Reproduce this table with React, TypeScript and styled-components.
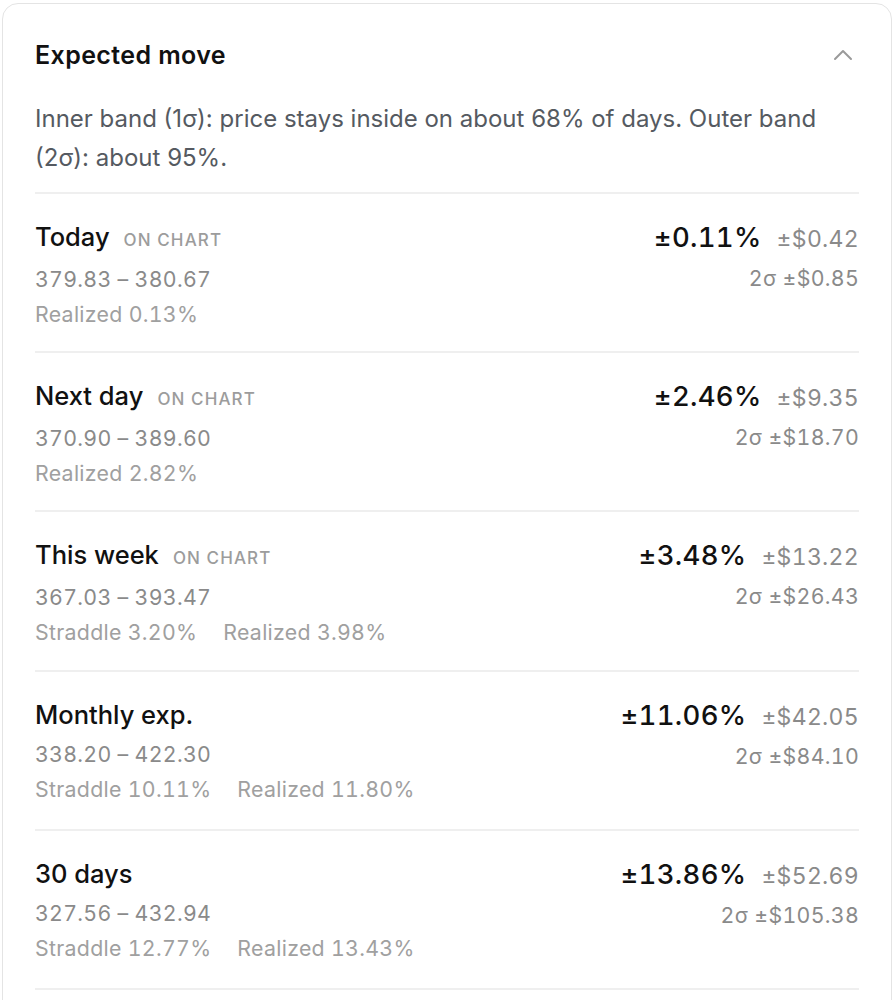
import React from "react";
import styled, { createGlobalStyle } from "styled-components";

const Global = createGlobalStyle`
  html, body { margin: 0; padding: 0; background: #ffffff; }
  body { font-family: Inter, "Noto Sans", sans-serif; -webkit-font-smoothing: antialiased; }
  * { box-sizing: border-box; }
`;

const Card = styled.section`
  margin: 3px 2px 0 2px;
  border: 1.5px solid #e4e4e4;
  border-radius: 16px;
  padding: 16px 32px 0 32px;
  background: #fff;
  min-height: 1100px;
`;

const Header = styled.div`
  display: flex;
  align-items: center;
  justify-content: space-between;
  height: 79px;
  padding-bottom: 9px;
`;

const Title = styled.h2`
  margin: 0;
  font-size: 25px;
  font-weight: 600;
  color: #111;
  letter-spacing: 0.4px;
`;

const Chevron = styled.svg`
  margin-right: 6px;
  color: #9a9a9a;
`;

const Desc = styled.p`
  margin: 0;
  padding: 0 0 15px 0;
  font-size: 24px;
  line-height: 39px;
  color: #555a61;
  border-bottom: 2px solid #efefef;
`;

const Row = styled.div`
  display: flex;
  justify-content: space-between;
  padding: 23px 0 0 0;
  border-bottom: 2px solid #efefef;
  height: 159.2px;
`;

const Left = styled.div`
  display: flex;
  flex-direction: column;
`;

const Right = styled.div`
  display: flex;
  flex-direction: column;
  align-items: flex-end;
`;

const LabelLine = styled.div`
  display: flex;
  align-items: baseline;
  gap: 14px;
  line-height: 40px;
`;

const Label = styled.span`
  font-size: 25.5px;
  font-weight: 500;
  color: #111;
`;

const Tag = styled.span`
  font-size: 17px;
  font-weight: 500;
  letter-spacing: 1.1px;
  color: #9c9c9c;
  text-transform: uppercase;
`;

const Range = styled.div`
  font-size: 21.3px;
  line-height: 38px;
  color: #8a8a8a;
  font-variant-numeric: tabular-nums;
  letter-spacing: 0.3px;
`;

const Stats = styled.div`
  display: flex;
  gap: 26px;
  font-size: 21.3px;
  line-height: 32px;
  color: #a0a0a0;
  font-variant-numeric: tabular-nums;
  letter-spacing: 0.3px;
`;

const MoveLine = styled.div`
  display: flex;
  align-items: baseline;
  gap: 15px;
  line-height: 40px;
`;

const Pct = styled.span`
  font-size: 27.5px;
  font-weight: 500;
  color: #111;
  font-variant-numeric: tabular-nums;
  letter-spacing: 0.3px;
`;

const Dollar = styled.span`
  font-size: 23px;
  color: #8a8a8a;
  font-variant-numeric: tabular-nums;
  letter-spacing: 0.3px;
`;

const Sigma = styled.div`
  font-size: 21.3px;
  line-height: 38px;
  color: #8a8a8a;
  font-variant-numeric: tabular-nums;
  letter-spacing: 0.3px;
`;

type Item = {
  label: string;
  onChart: boolean;
  range: string;
  straddle?: string;
  realized: string;
  pct: string;
  dollar: string;
  two: string;
};

const items: Item[] = [
  { label: "Today", onChart: true, range: "379.83 – 380.67", realized: "0.13%", pct: "±0.11%", dollar: "±$0.42", two: "±$0.85" },
  { label: "Next day", onChart: true, range: "370.90 – 389.60", realized: "2.82%", pct: "±2.46%", dollar: "±$9.35", two: "±$18.70" },
  { label: "This week", onChart: true, range: "367.03 – 393.47", straddle: "3.20%", realized: "3.98%", pct: "±3.48%", dollar: "±$13.22", two: "±$26.43" },
  { label: "Monthly exp.", onChart: false, range: "338.20 – 422.30", straddle: "10.11%", realized: "11.80%", pct: "±11.06%", dollar: "±$42.05", two: "±$84.10" },
  { label: "30 days", onChart: false, range: "327.56 – 432.94", straddle: "12.77%", realized: "13.43%", pct: "±13.86%", dollar: "±$52.69", two: "±$105.38" },
];

export default function App() {
  return (
    <>
      <Global />
      <Card>
        <Header>
          <Title>Expected move</Title>
          <Chevron width="20" height="12" viewBox="0 0 20 12" fill="none">
            <polyline points="2,10 10,2 18,10" stroke="currentColor" strokeWidth="2" strokeLinecap="round" strokeLinejoin="round" />
          </Chevron>
        </Header>
        <Desc>
          Inner band (1σ): price stays inside on about 68% of days. Outer band (2σ): about 95%.
        </Desc>
        {items.map((it) => (
          <Row key={it.label}>
            <Left>
              <LabelLine>
                <Label>{it.label}</Label>
                {it.onChart && <Tag>On chart</Tag>}
              </LabelLine>
              <Range>{it.range}</Range>
              <Stats>
                {it.straddle && <span>Straddle {it.straddle}</span>}
                <span>Realized {it.realized}</span>
              </Stats>
            </Left>
            <Right>
              <MoveLine>
                <Pct>{it.pct}</Pct>
                <Dollar>{it.dollar}</Dollar>
              </MoveLine>
              <Sigma>2σ {it.two}</Sigma>
            </Right>
          </Row>
        ))}
      </Card>
    </>
  );
}
